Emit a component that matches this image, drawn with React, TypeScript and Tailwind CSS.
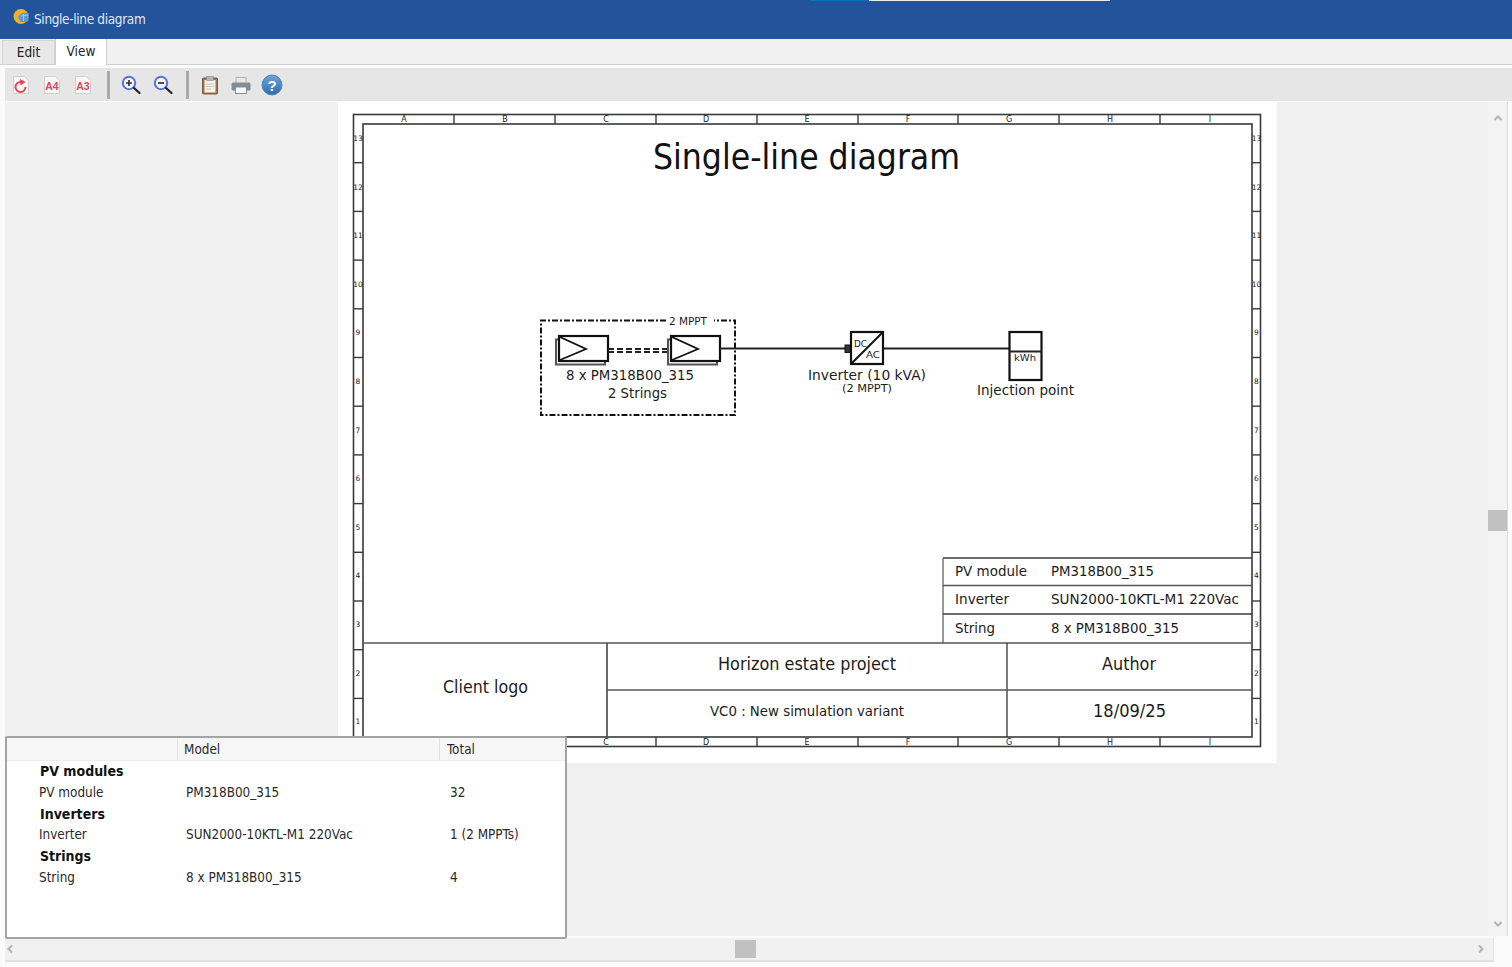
import React from "react";

const UI = { fontFamily: '"DejaVu Sans Condensed","DejaVu Sans",sans-serif' };
const ink = "#1c1c1c";

function T({ x, y, w, s, children, family = "DejaVu Sans", fill = ink, weight }: { x: number; y: number; w?: number; s: number; children: React.ReactNode; family?: string; fill?: string; weight?: number }) {
  return (
    <text x={x} y={y} fontSize={s} fontFamily={`"${family}","DejaVu Sans",sans-serif`} fill={fill} fontWeight={weight} textLength={w} lengthAdjust={w ? "spacingAndGlyphs" : undefined}>
      {children}
    </text>
  );
}

function Module({ x }: { x: number }) {
  return (
    <g stroke="#111" fill="#fff">
      <rect x={x - 3} y={339.5} width={49} height={25} strokeWidth={2} stroke="#555" />
      <rect x={x} y={336} width={49} height={25} strokeWidth={2.2} />
      <path d={`M${x + 1} 337 L${x + 27} 349 L${x + 1} 360`} fill="none" strokeWidth={1.8} />
    </g>
  );
}

function Sheet() {
  const ox = 338;
  const oy = 102;
  const colTicks = [454, 555, 656, 757, 858, 958, 1059, 1160];
  const letters: [string, number][] = [["A", 404], ["B", 505], ["C", 606], ["D", 706], ["E", 807], ["F", 908], ["G", 1009], ["H", 1110], ["I", 1210]];
  const rowTicks = Array.from({ length: 12 }, (_, i) => 114 + 48.7 * (i + 1));
  const rows = [13, 12, 11, 10, 9, 8, 7, 6, 5, 4, 3, 2, 1];
  return (
    <svg width={939} height={661} viewBox={`${ox} ${oy} 939 661`} className="block">
      <g fill="none" stroke="#3a3a3a">
        <rect x={353.5} y={114.5} width={907} height={632} strokeWidth={1.6} />
        <rect x={363} y={124} width={889} height={613} strokeWidth={1.6} />
        {colTicks.map((x) => (
          <g key={x}>
            <line x1={x} y1={114} x2={x} y2={124} strokeWidth={1.4} />
            <line x1={x} y1={737} x2={x} y2={747} strokeWidth={1.4} />
          </g>
        ))}
        {rowTicks.map((y) => (
          <g key={y}>
            <line x1={353} y1={y} x2={363} y2={y} strokeWidth={1.4} />
            <line x1={1252} y1={y} x2={1261} y2={y} strokeWidth={1.4} />
          </g>
        ))}
        <line x1={363} y1={643} x2={1252} y2={643} strokeWidth={1.6} stroke="#555" />
        <line x1={607} y1={643} x2={607} y2={737} strokeWidth={1.6} stroke="#444" />
        <line x1={1007} y1={643} x2={1007} y2={737} strokeWidth={1.4} stroke="#444" />
        <line x1={607} y1={690} x2={1252} y2={690} strokeWidth={1.6} stroke="#555" />
        <line x1={943} y1={558} x2={1252} y2={558} strokeWidth={1.4} />
        <line x1={943} y1={585.5} x2={1252} y2={585.5} strokeWidth={1.4} stroke="#555" />
        <line x1={943} y1={614} x2={1252} y2={614} strokeWidth={1.4} />
        <line x1={943} y1={558} x2={943} y2={643} strokeWidth={1.2} stroke="#555" />
      </g>
      {letters.map(([l, x]) => (
        <g key={l}>
          <text x={x} y={122} fontSize={8} textAnchor="middle" fontFamily="DejaVu Sans" fill="#222">{l}</text>
          <text x={x} y={745} fontSize={8} textAnchor="middle" fontFamily="DejaVu Sans" fill="#222">{l}</text>
        </g>
      ))}
      {rows.map((r, i) => {
        const y = 141 + i * 48.6;
        return (
          <g key={r}>
            <text x={358} y={y} fontSize={7.5} textAnchor="middle" fontFamily="DejaVu Sans" fill="#222">{r}</text>
            <text x={1256.5} y={y} fontSize={7.5} textAnchor="middle" fontFamily="DejaVu Sans" fill="#222">{r}</text>
          </g>
        );
      })}

      <T x={653} y={168.5} w={307} s={36} family="DejaVu Sans Condensed" fill="#111">Single-line diagram</T>

      <path d="M666 320.5 H541 V415 H735 V320.5 H714" fill="none" stroke="#111" strokeWidth={2} strokeDasharray="6 2 2 2" />
      <T x={669} y={324.5} w={38} s={10.5}>2 MPPT</T>
      <Module x={559} />
      <Module x={671} />
      <g stroke="#222" strokeWidth={2} strokeDasharray="6 3" fill="none">
        <line x1={608} y1={349} x2={667} y2={349} />
        <line x1={608} y1={352} x2={667} y2={352} />
      </g>
      <line x1={720} y1={348.5} x2={1009} y2={348.5} stroke="#222" strokeWidth={2} />
      <T x={566} y={380} w={128} s={14}>8 x PM318B00_315</T>
      <T x={608} y={398} w={59} s={14}>2 Strings</T>

      <rect x={845} y={345} width={6} height={7.5} fill="#333" stroke="#111" strokeWidth={1} />
      <rect x={851} y={332} width={32} height={32} fill="#fff" stroke="#111" strokeWidth={2.2} />
      <line x1={851} y1={364} x2={883} y2={332} stroke="#111" strokeWidth={2} />
      <T x={854} y={347} w={13} s={9.5}>DC</T>
      <T x={866} y={358} w={14} s={9.5}>AC</T>
      <T x={808} y={380} w={118} s={14}>Inverter (10 kVA)</T>
      <T x={842} y={392} w={50} s={11}>(2 MPPT)</T>

      <rect x={1009.5} y={332} width={32} height={48} fill="#fff" stroke="#111" strokeWidth={2.2} />
      <line x1={1009} y1={351.5} x2={1042} y2={351.5} stroke="#222" strokeWidth={1.8} />
      <T x={1014} y={361} w={22} s={9.5}>kWh</T>
      <T x={977} y={395} w={97} s={14}>Injection point</T>

      <T x={955} y={576} w={72} s={14}>PV module</T>
      <T x={1051} y={576} w={103} s={14}>PM318B00_315</T>
      <T x={955} y={604} w={54} s={14}>Inverter</T>
      <T x={1051} y={604} w={188} s={14}>SUN2000-10KTL-M1 220Vac</T>
      <T x={955} y={633} w={40} s={14}>String</T>
      <T x={1051} y={633} w={128} s={14}>8 x PM318B00_315</T>

      <T x={443} y={693} w={85} s={18} family="DejaVu Sans Condensed">Client logo</T>
      <T x={718} y={670} w={178} s={18} family="DejaVu Sans Condensed">Horizon estate project</T>
      <T x={1102} y={670} w={54} s={18} family="DejaVu Sans Condensed">Author</T>
      <T x={710} y={716} w={194} s={14}>VC0 : New simulation variant</T>
      <T x={1093} y={717} w={73} s={18} family="DejaVu Sans Condensed">18/09/25</T>
    </svg>
  );
}

function PageIcon({ children }: { children: React.ReactNode }) {
  return (
    <svg width={20} height={20} viewBox="0 0 20 20" className="block">
      <path d="M2.5 1.5 H13.5 L17.5 5.5 V18.5 H2.5 Z" fill="#f7f7f7" stroke="#cfcfcf" />
      {children}
    </svg>
  );
}

function A({ t }: { t: string }) {
  return (
    <PageIcon>
      <text x={10} y={15} fontSize={10.5} fontWeight={700} textAnchor="middle" fontFamily="Liberation Sans" fill="#e2435a">{t}</text>
    </PageIcon>
  );
}

function Zoom({ minus }: { minus?: boolean }) {
  return (
    <svg width={20} height={20} viewBox="0 0 20 20" className="block">
      <circle cx={8} cy={8} r={6.2} fill="#f2f4ff" stroke="#5a72d8" strokeWidth={2} />
      <path d={minus ? "M5 8 H11" : "M5 8 H11 M8 5 V11"} stroke="#333" strokeWidth={1.7} />
      <path d="M13 13 L18.5 18" stroke="#222" strokeWidth={2.2} strokeLinecap="round" />
    </svg>
  );
}

function Toolbar() {
  return (
    <div className="ml-[5px] h-[33px] bg-[#e6e6e6] flex items-center">
      <div className="ml-[6px]"><PageIcon><path d="M14.5 12 A5 5 0 1 1 9.5 7" fill="none" stroke="#ee3c52" strokeWidth={2} /><path d="M9 4 L14.5 7 L9.5 10.5 Z" fill="#ee3c52" /></PageIcon></div>
      <div className="ml-[11px]"><A t="A4" /></div>
      <div className="ml-[11px]"><A t="A3" /></div>
      <div className="ml-[14px] w-[3px] h-[28px] bg-[#a9a9a9]" />
      <div className="ml-[11px]"><Zoom /></div>
      <div className="ml-[12px]"><Zoom minus /></div>
      <div className="ml-[13px] w-[3px] h-[28px] bg-[#a9a9a9]" />
      <div className="ml-[11px]">
        <svg width={20} height={20} viewBox="0 0 20 20" className="block">
          <rect x={2.5} y={3} width={15} height={16} rx={1} fill="#9a7350" stroke="#7b5a3e" />
          <rect x={4.5} y={5} width={11} height={12.5} fill="#f4f1ea" />
          <rect x={6.5} y={1.5} width={7} height={4} fill="#b5b5b5" stroke="#888" strokeWidth={0.6} />
          <path d="M6 9 H14 M6 11.5 H14 M6 14 H11" stroke="#c9c5ba" />
        </svg>
      </div>
      <div className="ml-[10px]">
        <svg width={22} height={20} viewBox="0 0 22 20" className="block">
          <rect x={6} y={2.5} width={10} height={6} fill="#e8e8e8" stroke="#b0b0b0" />
          <rect x={1.5} y={7.5} width={19} height={8} rx={1.5} fill="#7f8c9c" />
          <rect x={5.5} y={12} width={11} height={6.5} fill="#fafafa" stroke="#8a8a8a" />
        </svg>
      </div>
      <div className="ml-[9px]">
        <svg width={22} height={22} viewBox="0 0 22 22" className="block">
          <defs>
            <linearGradient id="h" x1="0" y1="0" x2="0" y2="1">
              <stop offset="0" stopColor="#6fa5d8" />
              <stop offset="1" stopColor="#2f6cab" />
            </linearGradient>
          </defs>
          <circle cx={11} cy={11} r={10} fill="url(#h)" stroke="#4f88c0" />
          <text x={11} y={16.5} fontSize={15} fontWeight={700} textAnchor="middle" fontFamily="Liberation Sans" fill="#fff">?</text>
        </svg>
      </div>
    </div>
  );
}

function Chevron({ d }: { d: string }) {
  return (
    <svg width={10} height={10} viewBox="0 0 10 10" className="block">
      <path d={d} fill="none" stroke="#b4b4b4" strokeWidth={2} />
    </svg>
  );
}

const tableRows: [string, string, string, boolean][] = [
  ["PV modules", "", "", true],
  ["PV module", "PM318B00_315", "32", false],
  ["Inverters", "", "", true],
  ["Inverter", "SUN2000-10KTL-M1 220Vac", "1 (2 MPPTs)", false],
  ["Strings", "", "", true],
  ["String", "8 x PM318B00_315", "4", false],
];

function Summary() {
  return (
    <div style={UI} className="absolute left-0 top-[634px] w-[562px] h-[203px] bg-white border-2 border-[#a3a3a3] rounded-[2px] text-[13.4px] text-[#2a2a2a]">
      <div className="grid grid-cols-[170px_262px_1fr] h-[23px] bg-[#f6f6f6] border-b border-[#ececec] items-center">
        <div />
        <div className="pl-[6px] pt-[2px] h-full flex items-center border-l border-[#e2e2e2]">Model</div>
        <div className="pl-[7px] pt-[2px] h-full flex items-center border-l border-[#e2e2e2]">Total</div>
      </div>
      {tableRows.map(([a, b, c, bold]) => (
        <div key={a} className="grid grid-cols-[170px_262px_1fr] h-[21.3px] items-center">
          {bold ? (
            <div className="pl-[33px] font-bold text-[14px] text-[#111]">{a}</div>
          ) : (
            <div className="pl-[32px]">{a}</div>
          )}
          <div className="pl-[9px]">{b}</div>
          <div className="pl-[11px]">{c}</div>
        </div>
      ))}
    </div>
  );
}

export default function App() {
  return (
    <div className="w-[1512px] h-[967px] overflow-hidden bg-[#fbfbfb] flex flex-col relative">
      <div className="h-[39px] bg-[#23539b] flex items-center pl-[13px] shrink-0" style={UI}>
        <svg width={16} height={17} viewBox="0 0 16 17" className="block -mt-[6px]">
          <circle cx={8} cy={8.5} r={7.5} fill="#f2b21c" />
          <path d="M5 8.5 Q8 3.5 15.5 5 V13 Q11 15 7 13.5 Z" fill="#5d9bd6" />
          <path d="M8 8 L15 7 M10.5 6 V13" stroke="#a9d0ef" strokeWidth={0.8} />
        </svg>
        <span className="ml-[5px] text-[13.5px] tracking-[-0.35px] text-[#dfe8f5]">Single-line diagram</span>
      </div>
      <div className="absolute top-0 left-[810px] w-[59px] h-px bg-[#0f6cc4]" />
      <div className="absolute top-0 left-[869px] w-[241px] h-px bg-[#e8eef6]" />

      <div className="h-[26px] bg-[#f0f0f0] border-b border-[#cfcfcf] flex items-end pl-[2px] shrink-0 text-[13.5px] text-[#222]" style={UI}>
        <div className="w-[53px] h-[24px] bg-[#e8e8e8] border border-b-0 border-[#d4d4d4] flex items-center justify-center">Edit</div>
        <div className="w-[52px] h-[26px] bg-white border-x border-t-0 border-[#cfcfcf] flex items-center justify-center -mb-px pb-[2px]">View</div>
      </div>
      <div className="h-[3px] shrink-0" />
      <Toolbar />

      <div className="flex-1 min-h-0 ml-[5px] mt-px relative flex flex-col">
        <div className="h-[834px] flex mr-[4px] shrink-0">
          <div className="flex-1 bg-[#f0f0f0] pl-[333px]">
            <div className="w-[939px] h-[661px] bg-white">
              <Sheet />
            </div>
          </div>
          <div className="w-[20px] bg-[#f3f3f3] border-r border-[#dcdcdc] flex flex-col items-center">
            <div className="mt-[11px]"><Chevron d="M1.5 7 L5 3.5 L8.5 7" /></div>
            <div className="mt-[387px] w-[19px] h-[21px] bg-[#c1c1c1] -ml-px" />
            <div className="mt-[388px]"><Chevron d="M1.5 3 L5 6.5 L8.5 3" /></div>
          </div>
        </div>
        <div className="mt-[2px] h-[24px] mr-[18px] bg-[#f1f1f1] border-b-2 border-[#e2e2e2] flex items-center shrink-0 border-r">
          <div className="ml-0"><Chevron d="M7 1.5 L3.5 5 L7 8.5" /></div>
          <div className="ml-[720px] w-[21px] h-[18px] bg-[#c1c1c1]" />
          <div className="ml-auto mr-[7px]"><Chevron d="M3 1.5 L6.5 5 L3 8.5" /></div>
        </div>
        <Summary />
      </div>
    </div>
  );
}
